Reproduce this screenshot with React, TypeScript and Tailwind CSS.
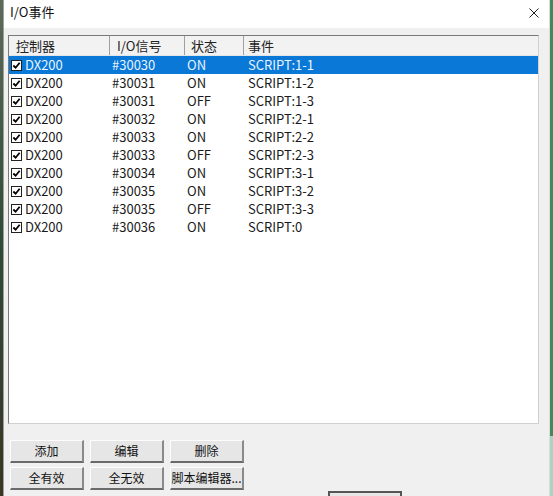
import React from 'react'

interface Row {
  signal: string
  state: string
  event: string
}

const ROWS: Row[] = [
  { signal: '#30030', state: 'ON', event: 'SCRIPT:1-1' },
  { signal: '#30031', state: 'ON', event: 'SCRIPT:1-2' },
  { signal: '#30031', state: 'OFF', event: 'SCRIPT:1-3' },
  { signal: '#30032', state: 'ON', event: 'SCRIPT:2-1' },
  { signal: '#30033', state: 'ON', event: 'SCRIPT:2-2' },
  { signal: '#30033', state: 'OFF', event: 'SCRIPT:2-3' },
  { signal: '#30034', state: 'ON', event: 'SCRIPT:3-1' },
  { signal: '#30035', state: 'ON', event: 'SCRIPT:3-2' },
  { signal: '#30035', state: 'OFF', event: 'SCRIPT:3-3' },
  { signal: '#30036', state: 'ON', event: 'SCRIPT:0' },
]

const FONT = "font-['Noto_Sans_CJK_SC','Noto_Sans',sans-serif]"

function Check() {
  return (
    <span className="flex h-[11px] w-[11px] items-center justify-center border border-[#222] bg-white">
      <svg viewBox="0 0 10 10" className="h-[9px] w-[9px]">
        <path d="M1.5 5 L4 7.5 L8.5 2" fill="none" stroke="#000" strokeWidth={2} />
      </svg>
    </span>
  )
}

function Btn({ label }: { label: string }) {
  return (
    <button className="flex h-[23px] w-[74px] shrink-0 items-center justify-center whitespace-nowrap border-t border-l border-t-[#fdfdfd] border-l-[#fdfdfd] border-b-2 border-r-2 border-b-[#6b6b6b] border-r-[#8a8a8a] bg-[#e6e6e6] text-[12px] leading-none text-[#111]">
      {label}
    </button>
  )
}

export default function App() {
  return (
    <div className={`flex h-[496px] w-[553px] overflow-hidden bg-[#f0f0f0] ${FONT}`}>
      {/* left desktop strip */}
      <div className="w-[3px] shrink-0 bg-gradient-to-b from-[#5d6b5a] via-[#2e4a36] to-[#3a3524]" />

      {/* window */}
      <div className="flex min-h-0 flex-1 flex-col overflow-hidden border-l border-[#9aa09a]">
        {/* title bar */}
        <div className="flex h-[28px] shrink-0 items-center justify-between bg-white pb-[4px] pl-[6px] pr-[10px]">
          <span className="text-[13px] text-[#111]">I/O事件</span>
          <svg viewBox="0 0 10 10" className="mt-[2px] h-[10px] w-[10px]">
            <path d="M0.5 0.5 L9.5 9.5 M9.5 0.5 L0.5 9.5" stroke="#222" strokeWidth={1} />
          </svg>
        </div>

        {/* body */}
        <div className="flex shrink-0 flex-col pl-[4px] pt-[7px]">
          {/* list view */}
          <div className="flex h-[389px] w-[531px] shrink-0 flex-col border border-[#7a7a7a] border-b-[#d0d0d0] border-r-[#d0d0d0] bg-white">
            <div className="flex h-[20px] shrink-0 items-center border-b border-[#e5e5e5] bg-[#f2f2f2] text-[13px] text-[#222]">
              <div className="w-[100px] pl-[7px]">控制器</div>
              <div className="h-full w-px bg-[#a0a0a0]" />
              <div className="w-[74px] pl-[7px]">I/O信号</div>
              <div className="h-full w-px bg-[#a0a0a0]" />
              <div className="w-[58px] pl-[6px]">状态</div>
              <div className="h-full w-px bg-[#a0a0a0]" />
              <div className="flex-1 pl-[4px]">事件</div>
            </div>
            {ROWS.map((r, i) => (
              <div
                key={i}
                className={`flex h-[18px] shrink-0 items-center text-[13px] ${
                  i === 0 ? 'bg-[#0a78d6] text-[#e8f4ff]' : 'text-[#1a1a1a]'
                }`}
              >
                <div className="flex w-[101px] items-center gap-[3px] pl-[2px]">
                  <Check />
                  <span>DX200</span>
                </div>
                <div className="w-[75px] pl-[2px]">{r.signal}</div>
                <div className="w-[59px] pl-[2px]">{r.state}</div>
                <div className="flex-1 pl-[4px]">{r.event}</div>
              </div>
            ))}
          </div>

          {/* buttons */}
          <div className="mt-[16px] flex flex-col gap-[4px] pl-[2px]">
            <div className="flex gap-[6px]">
              <Btn label="添加" />
              <Btn label="编辑" />
              <Btn label="删除" />
            </div>
            <div className="flex gap-[6px]">
              <Btn label="全有效" />
              <Btn label="全无效" />
              <Btn label="脚本编辑器..." />
            </div>
          </div>
          <div className="ml-[320px] mt-[1px] h-[10px] w-[74px] border-2 border-b-0 border-[#555] bg-[#e6e6e6]" />
        </div>
      </div>

      {/* right desktop strip */}
      <div className="flex w-[4px] shrink-0 flex-col border-l border-[#dcdcdc]">
        <div className="h-[436px] bg-[#3f8a5a]" />
        <div className="flex-1 bg-[#a9d3c2]" />
      </div>
    </div>
  )
}
